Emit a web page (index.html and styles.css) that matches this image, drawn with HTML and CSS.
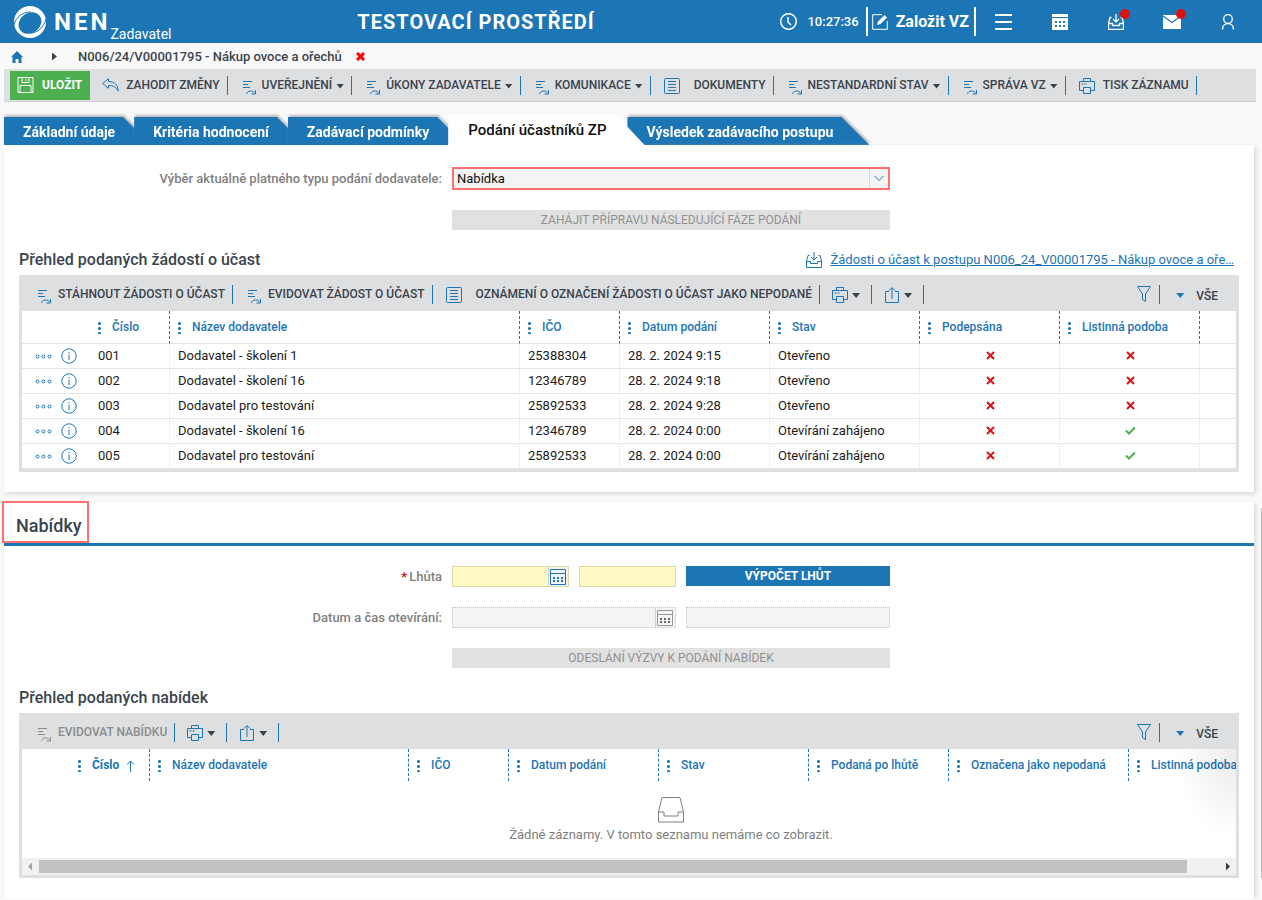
FILE: index.html
```
<!DOCTYPE html>
<html lang="cs">
<head>
  <meta charset="UTF-8" />
  <meta name="viewport" content="width=device-width, initial-scale=1.0"/>
  <title>NEN - Nákup ovoce a ořechů</title>
  <link rel="stylesheet" href="styles.css">
</head>
<body>
  <!-- Shared icons -->
  <svg class="sprite" aria-hidden="true">
    <symbol id="i-task" viewBox="0 0 15 15"><path d="M1 1.500h9M1 4.500h5M1 7.500h7M4.500 14c1-4 6.500-4 8.500-.5M13.500 10v4h-4"/></symbol>
    <symbol id="i-doc" viewBox="0 0 16 16"><rect x=".5" y=".5" width="15" height="15" rx="1"/><path d="M4 3.500h8M4 6.500h8M4 9.500h8M4 12.500h8"/></symbol>
    <symbol id="i-print" viewBox="0 0 16 16"><path d="M4.500 3.500v-3h7v3M4.500 12.500h-4v-9h15v9h-4M2.500 6h2M5.500 6h2"/><path d="M4.500 9.500h7v6h-7z"/></symbol>
    <symbol id="i-share" viewBox="0 0 14 16"><path d="M4 4.500H.5v11h13v-11H10M7 12V1M4 3.500l3-3 3 3"/></symbol>
    <symbol id="i-filter" viewBox="0 0 14 16"><path d="M.5.500h13L8.500 8v7.500l-3-2V8z"/></symbol>
    <symbol id="i-inbox" viewBox="0 0 16 16"><path d="M3.500 3.500H2L.5 9v6.500h15V9L14 3.500h-1.500M.5 9.500h4v2h7v-2h4M8 0v8M5 5l3 3 3-3"/></symbol>
    <symbol id="i-cal" viewBox="0 0 16 16"><path d="M.5.500h15v15H.5zM.5 4.500h15"/><path class="solid" d="M3 8h2v2H3zM7 8h2v2H7zM11 8h2v2h-2zM3 11h2v2H3zM7 11h2v2H7zM11 11h2v2h-2z"/></symbol>
    <symbol id="i-more" viewBox="0 0 17 5"><circle cx="2.500" cy="2.500" r="1.500"/><circle cx="8.500" cy="2.500" r="1.500"/><circle cx="14.500" cy="2.500" r="1.500"/></symbol>
    <symbol id="i-info" viewBox="0 0 16 16"><circle cx="8" cy="8" r="7.200"/><path d="M8 6.500V12M8 4v1.200"/></symbol>
    <symbol id="i-x" viewBox="0 0 9 9"><path d="M1 1l7 7M8 1L1 8"/></symbol>
    <symbol id="i-ok" viewBox="0 0 11 9"><path d="M1 4.500L4 7.500 10 1.500"/></symbol>
  </svg>

  <header class="topbar">
    <a class="brand" href="#">
      <svg class="logo" viewBox="0 0 32 32" aria-hidden="true">
        <circle cx="16" cy="16" r="16" fill="#fff"/>
        <ellipse cx="16" cy="17" rx="12" ry="10" transform="rotate(-35 16 17)" fill="#1c75b4"/>
        <path d="M0 19C2 11 8 6 17 6M32 13c-2 8-8 14-16 14" fill="none" stroke="#1c75b4"/>
      </svg>
      <span class="brand-name">NEN</span>
      <span class="brand-role">Zadavatel</span>
    </a>
    <div class="env">TESTOVACÍ PROSTŘEDÍ</div>
    <div class="top-tools">
      <div class="clock">
        <svg class="icon" viewBox="0 0 17 17" aria-hidden="true"><circle cx="8.500" cy="8.500" r="7.800"/><path d="M8 4v5l3 3"/></svg>
        <time>10:27:36</time>
      </div>
      <a class="new-vz" href="#">
        <svg class="icon" viewBox="0 0 16 16" aria-hidden="true"><path d="M10 .7H.7v14.600h14.600V7"/><path d="M5 11l1-3.500 6.500-6.500L15 3.500 8.500 10z" fill="#fff" stroke="none"/></svg>
        Založit VZ
      </a>
      <button class="top-btn" aria-label="Menu"><svg class="icon menu" viewBox="0 0 17 16" aria-hidden="true"><path d="M0 1h17M0 8h17M0 15h17"/></svg></button>
      <button class="top-btn" aria-label="Kalendář"><svg class="icon" viewBox="0 0 16 16" aria-hidden="true"><path fill="#fff" stroke="none" d="M0 0h16v3H0zM0 4h16v12H0z"/><path d="M3 8h10M3 12h10" stroke="#1c75b4" stroke-width="2" stroke-dasharray="2"/></svg></button>
      <button class="top-btn" aria-label="Doručené"><svg class="icon" aria-hidden="true"><use href="#i-inbox"/></svg><span class="badge"></span></button>
      <button class="top-btn" aria-label="Zprávy"><svg class="icon wide" viewBox="0 0 18 14" aria-hidden="true"><path fill="#fff" stroke="none" d="M0 0h18v14H0z"/><path d="M0 1l9 6.500L18 1" stroke="#1c75b4"/></svg><span class="badge"></span></button>
      <button class="top-btn" aria-label="Uživatel"><svg class="icon" viewBox="0 0 16 16" aria-hidden="true"><circle cx="8" cy="5" r="4.300"/><path d="M2.500 15.500c0-8 11-8 11 0"/></svg></button>
    </div>
  </header>

  <nav class="breadcrumb" aria-label="Cesta">
    <a href="#" aria-label="Domů"><svg class="home" viewBox="0 0 12 12" aria-hidden="true"><path d="M6 0l6 6h-1.500v6H7.500V8h-3v4h-3V6H0z"/></svg></a>
    <span class="crumb-arrow"></span>
    <a class="crumb" href="#">N006/24/V00001795 - Nákup ovoce a ořechů</a>
    <button class="crumb-close" aria-label="Zavřít"><svg class="mark" aria-hidden="true"><use href="#i-x"/></svg></button>
  </nav>

  <div class="toolbar main-toolbar">
    <button class="save"><svg class="icon" viewBox="0 0 16 16" aria-hidden="true"><path d="M.5.500h15v15H.5zM4.500.500v5h7v-5M8.500 2v2M2.500 15.500v-7h11v7"/></svg>ULOŽIT</button>
    <button class="tool discard"><svg class="icon" viewBox="0 0 17 14" aria-hidden="true"><path d="M6.500.7L.7 5.500l5.800 4.800V7.500c5 0 7.500 1.500 9.500 5.500 0-6-3-9-9.500-9.500z"/></svg>ZAHODIT ZMĚNY</button>
    <button class="tool"><svg class="icon task" aria-hidden="true"><use href="#i-task"/></svg>UVEŘEJNĚNÍ<i class="caret"></i></button>
    <button class="tool"><svg class="icon task" aria-hidden="true"><use href="#i-task"/></svg>ÚKONY ZADAVATELE<i class="caret"></i></button>
    <button class="tool"><svg class="icon task" aria-hidden="true"><use href="#i-task"/></svg>KOMUNIKACE<i class="caret"></i></button>
    <button class="tool doc"><svg class="icon" aria-hidden="true"><use href="#i-doc"/></svg>DOKUMENTY</button>
    <button class="tool"><svg class="icon task" aria-hidden="true"><use href="#i-task"/></svg>NESTANDARDNÍ STAV<i class="caret"></i></button>
    <button class="tool"><svg class="icon task" aria-hidden="true"><use href="#i-task"/></svg>SPRÁVA VZ<i class="caret"></i></button>
    <button class="tool print"><svg class="icon" aria-hidden="true"><use href="#i-print"/></svg>TISK ZÁZNAMU</button>
  </div>

  <nav class="tabs" aria-label="Záložky">
    <div class="tab"><a href="#">Základní údaje</a></div>
    <div class="tab"><a href="#">Kritéria hodnocení</a></div>
    <div class="tab"><a href="#">Zadávací podmínky</a></div>
    <div class="tab active"><a href="#">Podání účastníků ZP</a></div>
    <div class="tab"><a href="#">Výsledek zadávacího postupu</a></div>
  </nav>

  <main>
    <section class="panel">
      <div class="form">
        <label for="typ">Výběr aktuálně platného typu podání dodavatele:</label>
        <div class="select-box">
          <select id="typ">
            <option>Nabídka</option>
          </select>
          <svg class="icon chevron" viewBox="0 0 10 6" aria-hidden="true"><path d="M.5.500L5 5 9.500.500"/></svg>
        </div>
        <button class="action" disabled>ZAHÁJIT PŘÍPRAVU NÁSLEDUJÍCÍ FÁZE PODÁNÍ</button>
      </div>

      <div class="list-head">
        <h3>Přehled podaných žádostí o účast</h3>
        <svg class="icon" aria-hidden="true"><use href="#i-inbox"/></svg>
        <a class="list-link" href="#">Žádosti o účast k postupu N006_24_V00001795 - Nákup ovoce a oře…</a>
      </div>

      <div class="list">
        <div class="toolbar">
          <button class="tool"><svg class="icon task" aria-hidden="true"><use href="#i-task"/></svg>STÁHNOUT ŽÁDOSTI O ÚČAST</button>
          <button class="tool"><svg class="icon task" aria-hidden="true"><use href="#i-task"/></svg>EVIDOVAT ŽÁDOST O ÚČAST</button>
          <button class="tool doc"><svg class="icon" aria-hidden="true"><use href="#i-doc"/></svg>OZNÁMENÍ O OZNAČENÍ ŽÁDOSTI O ÚČAST JAKO NEPODANÉ</button>
          <button class="tool small" aria-label="Tisk"><svg class="icon" aria-hidden="true"><use href="#i-print"/></svg><i class="caret"></i></button>
          <button class="tool small" aria-label="Export"><svg class="icon" aria-hidden="true"><use href="#i-share"/></svg><i class="caret"></i></button>
          <button class="tool filter" aria-label="Filtr"><svg class="icon" aria-hidden="true"><use href="#i-filter"/></svg></button>
          <button class="view"><i class="caret"></i>VŠE</button>
        </div>
        <table class="requests">
          <colgroup><col class="w68"><col class="w80"><col><col class="w100"><col class="w150"><col class="w150"><col class="w140"><col class="w140"><col class="w36"></colgroup>
          <thead>
            <tr><th class="plain"></th><th><i class="dots"></i>Číslo</th><th><i class="dots"></i>Název dodavatele</th><th><i class="dots"></i>IČO</th><th><i class="dots"></i>Datum podání</th><th><i class="dots"></i>Stav</th><th><i class="dots"></i>Podepsána</th><th><i class="dots"></i>Listinná podoba</th><th class="plain"></th></tr>
          </thead>
          <tbody>
            <tr>
              <td class="row-tools"><a href="#" aria-label="Akce"><svg class="icon more"><use href="#i-more"/></svg></a><a href="#" aria-label="Detail"><svg class="icon"><use href="#i-info"/></svg></a></td>
              <td>001</td><td>Dodavatel - školení 1</td><td>25388304</td><td>28. 2. 2024 9:15</td><td>Otevřeno</td>
              <td class="flag"><svg class="mark"><use href="#i-x"/></svg></td><td class="flag"><svg class="mark"><use href="#i-x"/></svg></td><td></td>
            </tr>
            <tr>
              <td class="row-tools"><a href="#" aria-label="Akce"><svg class="icon more"><use href="#i-more"/></svg></a><a href="#" aria-label="Detail"><svg class="icon"><use href="#i-info"/></svg></a></td>
              <td>002</td><td>Dodavatel - školení 16</td><td>12346789</td><td>28. 2. 2024 9:18</td><td>Otevřeno</td>
              <td class="flag"><svg class="mark"><use href="#i-x"/></svg></td><td class="flag"><svg class="mark"><use href="#i-x"/></svg></td><td></td>
            </tr>
            <tr>
              <td class="row-tools"><a href="#" aria-label="Akce"><svg class="icon more"><use href="#i-more"/></svg></a><a href="#" aria-label="Detail"><svg class="icon"><use href="#i-info"/></svg></a></td>
              <td>003</td><td>Dodavatel pro testování</td><td>25892533</td><td>28. 2. 2024 9:28</td><td>Otevřeno</td>
              <td class="flag"><svg class="mark"><use href="#i-x"/></svg></td><td class="flag"><svg class="mark"><use href="#i-x"/></svg></td><td></td>
            </tr>
            <tr>
              <td class="row-tools"><a href="#" aria-label="Akce"><svg class="icon more"><use href="#i-more"/></svg></a><a href="#" aria-label="Detail"><svg class="icon"><use href="#i-info"/></svg></a></td>
              <td>004</td><td>Dodavatel - školení 16</td><td>12346789</td><td>28. 2. 2024 0:00</td><td>Otevírání zahájeno</td>
              <td class="flag"><svg class="mark"><use href="#i-x"/></svg></td><td class="flag"><svg class="mark ok"><use href="#i-ok"/></svg></td><td></td>
            </tr>
            <tr>
              <td class="row-tools"><a href="#" aria-label="Akce"><svg class="icon more"><use href="#i-more"/></svg></a><a href="#" aria-label="Detail"><svg class="icon"><use href="#i-info"/></svg></a></td>
              <td>005</td><td>Dodavatel pro testování</td><td>25892533</td><td>28. 2. 2024 0:00</td><td>Otevírání zahájeno</td>
              <td class="flag"><svg class="mark"><use href="#i-x"/></svg></td><td class="flag"><svg class="mark ok"><use href="#i-ok"/></svg></td><td></td>
            </tr>
          </tbody>
        </table>
      </div>
    </section>

    <section class="panel">
      <div class="panel-head"><h2>Nabídky</h2></div>

      <div class="form">
        <label for="lhuta"><b>*</b>Lhůta</label>
        <div class="fields">
          <div class="date required"><input id="lhuta" type="text"><button aria-label="Vybrat datum"><svg class="icon" aria-hidden="true"><use href="#i-cal"/></svg></button></div>
          <input class="required" type="text" aria-label="Čas lhůty">
          <button class="action primary">VÝPOČET LHŮT</button>
        </div>
        <label for="otevirani">Datum a čas otevírání:</label>
        <div class="fields">
          <div class="date off"><input id="otevirani" type="text" disabled><button aria-label="Vybrat datum" disabled><svg class="icon" aria-hidden="true"><use href="#i-cal"/></svg></button></div>
          <input class="off" type="text" aria-label="Čas otevírání" disabled>
        </div>
        <button class="action" disabled>ODESLÁNÍ VÝZVY K PODÁNÍ NABÍDEK</button>
      </div>

      <div class="list-head"><h3>Přehled podaných nabídek</h3></div>

      <div class="list">
        <div class="toolbar">
          <button class="tool" disabled><svg class="icon task" aria-hidden="true"><use href="#i-task"/></svg>EVIDOVAT NABÍDKU</button>
          <button class="tool small" aria-label="Tisk"><svg class="icon" aria-hidden="true"><use href="#i-print"/></svg><i class="caret"></i></button>
          <button class="tool small" aria-label="Export"><svg class="icon" aria-hidden="true"><use href="#i-share"/></svg><i class="caret"></i></button>
          <button class="tool filter" aria-label="Filtr"><svg class="icon" aria-hidden="true"><use href="#i-filter"/></svg></button>
          <button class="view"><i class="caret"></i>VŠE</button>
        </div>
        <div class="scroller">
          <table class="offers">
            <colgroup><col class="w48"><col class="w80"><col><col class="w100"><col class="w150"><col class="w150"><col class="w140"><col class="w180"><col class="w140"></colgroup>
            <thead>
              <tr><th class="plain"></th><th class="sorted"><i class="dots"></i>Číslo<svg class="icon sort" viewBox="0 0 9 12" aria-hidden="true"><path d="M4.500 12V1M1 4.500L4.500 1 8 4.500"/></svg></th><th><i class="dots"></i>Název dodavatele</th><th><i class="dots"></i>IČO</th><th><i class="dots"></i>Datum podání</th><th><i class="dots"></i>Stav</th><th><i class="dots"></i>Podaná po lhůtě</th><th><i class="dots"></i>Označena jako nepodaná</th><th><i class="dots"></i>Listinná podoba</th></tr>
            </thead>
          </table>
          <div class="empty">
            <svg class="icon" viewBox="0 0 26 26" aria-hidden="true"><path d="M4 .500h18l3.500 14.500v10H.5V15zM.5 15H6v4h14v-4h5.500"/></svg>
            <p>Žádné záznamy. V tomto seznamu nemáme co zobrazit.</p>
          </div>
        </div>
        <div class="scrollbar"><i class="arrow left"></i><span class="track"><span class="thumb"></span></span><i class="arrow right"></i></div>
      </div>
    </section>
  </main>
</body>
</html>
```
FILE: styles.css
```
* {
  box-sizing: border-box;
}
body {
  margin: 0;
  font-family: Roboto, sans-serif;
  font-size: 13px;
  line-height: 16px;
  color: #3a444d;
  background: #f9f9f9;
}
h2, h3, p {
  margin: 0;
}
button, input, select {
  font: inherit;
  color: inherit;
  margin: 0;
  padding: 0;
  border: 0;
  border-radius: 0;
  background: none;
}
a {
  color: inherit;
  text-decoration: none;
}
svg {
  display: block;
  flex: none;
}
.sprite {
  position: absolute;
  width: 0;
  height: 0;
}
.icon {
  width: 16px;
  height: 16px;
  fill: none;
  stroke: #1c75b4;
  stroke-width: 1;
}
.solid {
  fill: #1c75b4;
  stroke: none;
}
.caret {
  width: 8px;
  height: 5px;
  flex: none;
  background: #3a444d;
  clip-path: polygon(0 0, 100% 0, 50% 100%);
}

/* Header */
.topbar {
  display: flex;
  justify-content: space-between;
  align-items: center;
  height: 43px;
  padding: 0 6px 0 14px;
  background: #1c75b4;
  color: #fff;
}
.topbar .icon {
  stroke: #fff;
}
.brand {
  display: flex;
  align-items: center;
}
.logo {
  width: 32px;
  height: 32px;
}
.brand-name {
  margin-left: 8px;
  font-size: 24px;
  font-weight: 700;
  letter-spacing: 3px;
}
.brand-role {
  align-self: flex-end;
  font-size: 14px;
  margin-bottom: -4px;
}
.env {
  font-size: 20px;
  font-weight: 700;
  letter-spacing: 1px;
}
.top-tools {
  display: flex;
  align-items: center;
}
.clock {
  display: flex;
  align-items: center;
  gap: 10px;
  font-weight: 500;
}
.clock .icon {
  width: 17px;
  height: 17px;
  stroke-width: 1.5;
}
.new-vz {
  display: flex;
  align-items: center;
  gap: 8px;
  height: 29px;
  margin-left: 7px;
  padding: 0 5px 0 4px;
  border-left: 2px solid #fff;
  border-right: 2px solid #fff;
  font-size: 16px;
  font-weight: 700;
}
.top-btn {
  position: relative;
  display: flex;
  justify-content: center;
  align-items: center;
  width: 56px;
  height: 43px;
}
.top-btn .icon {
  stroke-width: 1.3;
}
.top-btn .menu {
  width: 17px;
  stroke-width: 2;
}
.top-btn .wide {
  width: 18px;
  height: 14px;
}
.badge {
  position: absolute;
  top: 9px;
  right: 14px;
  width: 10px;
  height: 10px;
  border-radius: 50%;
  background: #dc1212;
}

/* Breadcrumb */
.breadcrumb {
  display: flex;
  align-items: center;
  height: 26px;
  padding: 1px 0 0 11px;
  font-weight: 500;
}
.home {
  width: 12px;
  height: 12px;
  fill: #1c75b4;
}
.crumb-arrow {
  width: 5px;
  height: 8px;
  margin: 0 21px 0 29px;
  background: #3a444d;
  clip-path: polygon(0 0, 100% 50%, 0 100%);
}
.crumb-close {
  margin-left: 14px;
}
.mark {
  width: 9px;
  height: 9px;
  fill: none;
  stroke: #dc1212;
  stroke-width: 2;
}
.mark.ok {
  width: 11px;
  stroke: #4caf50;
}
.crumb-close .mark {
  stroke: #f00;
  stroke-width: 3;
}

/* Toolbars */
.toolbar {
  display: flex;
  height: 33px;
  background: #dedfe1;
}
.main-toolbar {
  margin: 0 6px 0 4px;
  padding-left: 6px;
  align-items: center;
  border-bottom: 1px solid #d3d4d6;
}
.save {
  display: flex;
  align-items: center;
  gap: 8px;
  height: 29px;
  padding: 0 8px 0 7px;
  background: #4caf50;
  color: #fff;
  font-size: 12px;
  font-weight: 700;
}
.save .icon {
  width: 17px;
  stroke: #fff;
}
.tool {
  display: flex;
  align-items: center;
  height: 19px;
  padding: 0 7px 0 14px;
  border-right: 1px solid #1c75b4;
  font-size: 12px;
  font-weight: 500;
  white-space: nowrap;
}
.tool .task {
  width: 15px;
  height: 15px;
  margin: 4px 5px 0 0;
}
.tool .caret {
  margin: 2px 0 0 4px;
}
.discard {
  padding-left: 12px;
}
.discard .icon {
  width: 17px;
  height: 14px;
  margin-right: 7px;
}
.doc {
  padding-left: 13px;
}
.doc .icon {
  margin: 2px 14px 0 0;
}
.print {
  padding-left: 13px;
}
.print .icon {
  margin: 2px 8px 0 0;
}
.tool:disabled {
  color: #8c8c8c;
}
.tool:disabled .icon {
  stroke: #8c8c8c;
}

/* Tabs */
.tabs {
  display: flex;
  align-items: flex-end;
  height: 43px;
  padding-left: 4px;
}
.tab {
  position: relative;
  z-index: 1;
  margin-right: -17px;
  filter: drop-shadow(1px -2px 1px #bbb);
}
.tab a {
  display: block;
  height: 28px;
  padding: 0 36px 0 19px;
  background: #1c75b4;
  color: #fff;
  font-size: 14px;
  font-weight: 700;
  line-height: 30px;
  clip-path: polygon(0 0, calc(100% - 28px) 0, 100% 100%, 0 100%);
}
.tab:last-child {
  z-index: 0;
}
.tab.active {
  z-index: 2;
  filter: none;
}
.tab.active a {
  height: 30px;
  padding: 0 38px 0 20px;
  background: #fff;
  color: #111;
  font-size: 15px;
  font-weight: 500;
}

/* Panels */
main {
  position: relative;
}
/* page scroll position marker */
main::after {
  content: "";
  position: absolute;
  top: 363px;
  right: 0;
  bottom: 20px;
  width: 1px;
  background: #c1c1c1;
}
.panel {
  margin: 0 8px 10px 4px;
  padding: 22px 15px 20px;
  background: #fff;
  box-shadow: 2px 2px 4px #d8d8d8;
}
.panel + .panel {
  margin-bottom: 0;
  padding-top: 0;
}
.panel-head {
  height: 44px;
  margin: 0 -15px 20px;
  padding-top: 1px;
  border-bottom: 3px solid #1c75b4;
}
h2 {
  width: fit-content;
  height: 38px;
  padding: 11px 5px 0 12px;
  outline: 2px solid #ff7070;
  font-size: 18px;
  font-weight: 500;
  line-height: 24px;
}
h3 {
  font-size: 16px;
  font-weight: 500;
  line-height: 20px;
}

/* Forms */
.form {
  display: grid;
  grid-template-columns: 423fr 438fr 339fr;
  gap: 20px 10px;
}
.form label {
  grid-column: 1;
  align-self: center;
  text-align: right;
  font-weight: 500;
  color: #808080;
}
.form label b {
  color: #dc1212;
  margin-right: 2px;
}
.select-box {
  position: relative;
  height: 23px;
  border: 2px solid #ff7070;
  background: #f4f4f4;
}
.select-box select {
  width: 100%;
  height: 20px;
  padding: 0 3px;
  appearance: none;
  color: #111;
}
.chevron {
  position: absolute;
  top: 0;
  right: 0;
  width: 19px;
  height: 19px;
  padding: 6px 4px;
  border-left: 1px dotted #bbb;
}
.action {
  grid-column: 2;
  height: 20px;
  background: #e1e1e1;
  color: #919191;
  font-size: 12px;
}
.primary {
  grid-column: auto;
  background: #1c75b4;
  color: #fff;
  font-weight: 700;
}
.fields {
  display: grid;
  grid-template-columns: 117fr 97fr 204fr;
  gap: 10px;
}
.fields input {
  width: 100%;
  min-width: 0;
  height: 21px;
}
.fields .required {
  border: 1px solid #ddd8a5;
  background: #fff9c4;
}
.fields .off {
  border: 1px dotted #c4c4c4;
  background: #f4f4f4;
}
.date {
  display: flex;
  height: 21px;
}
.date.off {
  grid-column: span 2;
}
.date input {
  flex: 1;
  height: 19px;
}
.date button {
  width: 20px;
  padding-left: 1px;
  border-left: 1px solid #d0d0d0;
  background: #f4f4f4;
}
.off .icon {
  stroke: #999;
  filter: grayscale(1);
}

/* Lists */
.list-head {
  display: flex;
  align-items: center;
  height: 20px;
  margin: 20px 0 5px;
  padding-right: 5px;
}
.list-head h3 {
  flex: 1;
}
.list-link {
  margin-left: 8px;
  white-space: nowrap;
  text-decoration: underline;
  color: #1c75b4;
}
.list {
  border: 3px solid #dedfe1;
}
.list .toolbar {
  padding-top: 7px;
}
.list .tool {
  padding-bottom: 2px;
}
.list .task {
  margin: 5px 6px 0 0;
}
.list .toolbar .tool:first-child {
  padding-left: 15px;
}
.list .tool.small {
  padding: 0 11px 0 12px;
}
.tool.filter {
  margin-left: auto;
  padding-right: 7px;
}
.view {
  display: flex;
  align-items: center;
  gap: 12px;
  height: 19px;
  padding: 2px 18px 0 16px;
  font-size: 12px;
  font-weight: 500;
}
.view .caret {
  background: #1c75b4;
}
table {
  width: 100%;
  table-layout: fixed;
  border-collapse: separate;
  border-spacing: 0;
  background: #fff;
}
.w36 { width: 36px; }
.w48 { width: 48px; }
.w68 { width: 68px; }
.w80 { width: 80px; }
.w100 { width: 100px; }
.w140 { width: 140px; }
.w150 { width: 150px; }
.w180 { width: 180px; }
th {
  height: 32px;
  padding: 0 0 0 8px;
  border-right: 1px dashed #1c75b4;
  text-align: left;
  white-space: nowrap;
  font-size: 12px;
  font-weight: 500;
  color: #1c75b4;
}
th.plain {
  border-right: 0;
}
.requests th {
  height: 33px;
  border-bottom: 1px solid #dfe6ec;
}
td {
  height: 25px;
  padding: 0 0 0 8px;
  border-right: 1px dotted #dfe2e5;
  border-bottom: 1px solid #dfe6ec;
  color: #1c1c1c;
}
td:first-child, td:last-child {
  border-right: 0;
}
.dots {
  display: inline-block;
  width: 3px;
  height: 13px;
  margin-right: 11px;
  vertical-align: middle;
  background: radial-gradient(circle, #1c75b4 1px, transparent 2px) 0 0 / 3px 5px;
}
.sorted {
  font-weight: 700;
}
.sort {
  display: inline-block;
  width: 9px;
  height: 12px;
  margin-left: 7px;
  vertical-align: middle;
}
.row-tools {
  padding-left: 13px;
}
.row-tools a {
  display: inline-block;
  vertical-align: middle;
  margin-right: 9px;
}
.row-tools a + a {
  margin-right: 0;
}
.more {
  width: 17px;
  height: 5px;
}
.flag {
  padding: 0 0 0 2px;
}
.flag .mark {
  margin: -2px auto 0;
}
.scroller {
  position: relative;
  height: 109px;
  overflow: hidden;
  background: #fff;
}
.scroller::after {
  content: "";
  position: absolute;
  top: 0;
  right: 0;
  width: 60px;
  height: 90px;
  background: radial-gradient(ellipse at 100% 10%, rgba(0, 0, 0, 0.08), transparent 70%);
}
.offers {
  width: calc(100% + 33px);
}
.empty {
  display: flex;
  flex-direction: column;
  align-items: center;
  gap: 4px;
  margin: 16px -84px 0 0;
  color: #808080;
}
.empty .icon {
  width: 26px;
  height: 26px;
  stroke: #808080;
}
.scrollbar {
  display: flex;
  align-items: center;
  height: 17px;
  padding: 0 6px;
  background: #f1f1f1;
}
.arrow {
  width: 4px;
  height: 8px;
  background: #a3a3a3;
  clip-path: polygon(0 50%, 100% 0, 100% 100%);
}
.arrow.right {
  background: #3c3c3c;
  clip-path: polygon(0 0, 100% 50%, 0 100%);
}
.track {
  flex: 1;
  margin: 0 3px 0 7px;
}
.thumb {
  display: block;
  width: 97%;
  height: 13px;
  background: #c1c1c1;
}
```
